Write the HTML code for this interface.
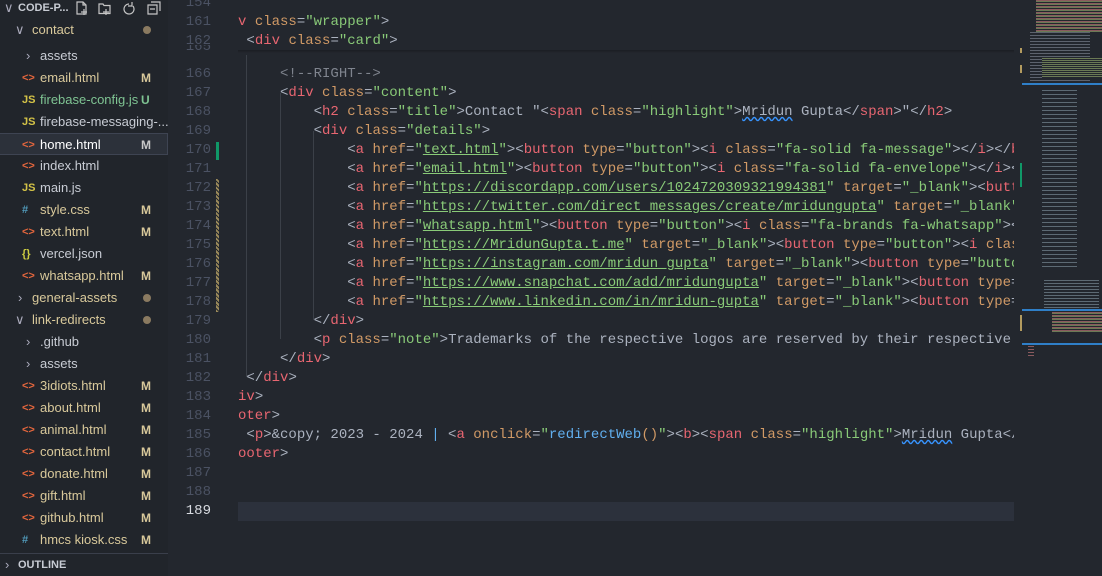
<!DOCTYPE html>
<html><head><meta charset="utf-8"><style>
*{margin:0;padding:0;box-sizing:border-box}
body{width:1102px;height:576px;overflow:hidden;background:#23272e;font-family:"Liberation Sans",sans-serif;position:relative}
#side{position:absolute;left:0;top:0;width:168px;height:576px;background:#21252b;color:#c8ccd4;font-size:13px}
.row{position:absolute;left:0;width:168px;height:22px;line-height:22px;white-space:nowrap}
.row .n{position:absolute}
.row .b{position:absolute;left:141px;font-weight:bold;font-size:12px}
.mod{color:#d9c99b}.unt{color:#7fc493}
.dot{position:absolute;left:143px;top:7px;width:8px;height:8px;border-radius:50%;background:#8a7a60}
.ic{position:absolute;left:22px;font-size:11px;font-weight:bold}
.chev{position:absolute;font-size:13px;color:#aab}
.html{color:#e4663d}.js{color:#d4c347}.css{color:#519aba}.json{color:#cbcb41}
#gut{position:absolute;left:168px;top:0;width:60px;height:576px;color:#4b5263;font-family:"Liberation Mono",monospace;font-size:14px}
.ln{position:absolute;right:17px;height:19px;line-height:19px}
#code{position:absolute;left:238px;top:0;width:776px;height:576px;overflow:hidden;font-family:"Liberation Mono",monospace;font-size:14px;color:#abb2bf}
.l{position:absolute;left:0;height:19px;line-height:19px;white-space:pre}
.t{color:#e86671}.a{color:#d19a66}.s{color:#89ca78}.c{color:#7f848e}.f{color:#61afef}.u{text-decoration:underline;text-decoration-color:#89ca78}
.g{position:absolute;width:1px;background:#3b4048}
#mini{position:absolute;left:1022px;top:0;width:80px;height:576px}
.mb{position:absolute;height:2px}
</style></head><body>
<div id="side">
<div class="row" style="top:-3px"><span class="chev" style="left:4px">∨</span><span class="n" style="left:18px;font-weight:bold;font-size:11px">CODE-P...</span>
<svg style="position:absolute;left:76px;top:4px" width="88" height="14" fill="none" stroke="#c5c5c5" stroke-width="1.2"><path d="M1 1h6l3 3v9H1z M7 1v3h3 M8 8v6 M5 11h6"/><path d="M23 3h4l1 1.5h6v8H23z M30 8v6 M27 11h6"/><path d="M53 3a5 5 0 1 0 4 2 M56 1v4h-4"/><path d="M72 4h9v9h-9z M75 1h9v9 M74 8h5"/></svg></div>
<div class="row mod" style="top:19px"><span class="chev" style="left:15px">∨</span><span class="n" style="left:32px">contact</span><span class="dot"></span></div>
<div class="row" style="top:45px"><span class="chev" style="left:26px">›</span><span class="n" style="left:40px">assets</span></div>
<div class="row mod" style="top:67px"><span class="ic html">&lt;&gt;</span><span class="n" style="left:40px">email.html</span><span class="b">M</span></div>
<div class="row unt" style="top:89px"><span class="ic js">JS</span><span class="n" style="left:40px">firebase-config.js</span><span class="b">U</span></div>
<div class="row" style="top:111px"><span class="ic js">JS</span><span class="n" style="left:40px">firebase-messaging-...</span></div>
<div class="row" style="top:133px;background:#2c313a;border:1px solid #3e4452;border-left:none"><span class="ic html">&lt;&gt;</span><span class="n" style="left:40px;color:#fff">home.html</span><span class="b" style="color:#c8c8c8">M</span></div>
<div class="row" style="top:155px"><span class="ic html">&lt;&gt;</span><span class="n" style="left:40px">index.html</span></div>
<div class="row" style="top:177px"><span class="ic js">JS</span><span class="n" style="left:40px">main.js</span></div>
<div class="row mod" style="top:199px"><span class="ic css">#</span><span class="n" style="left:40px">style.css</span><span class="b">M</span></div>
<div class="row mod" style="top:221px"><span class="ic html">&lt;&gt;</span><span class="n" style="left:40px">text.html</span><span class="b">M</span></div>
<div class="row" style="top:243px"><span class="ic json">{}</span><span class="n" style="left:40px">vercel.json</span></div>
<div class="row mod" style="top:265px"><span class="ic html">&lt;&gt;</span><span class="n" style="left:40px">whatsapp.html</span><span class="b">M</span></div>
<div class="row mod" style="top:287px"><span class="chev" style="left:18px">›</span><span class="n" style="left:32px">general-assets</span><span class="dot"></span></div>
<div class="row mod" style="top:309px"><span class="chev" style="left:15px">∨</span><span class="n" style="left:32px">link-redirects</span><span class="dot"></span></div>
<div class="row" style="top:331px"><span class="chev" style="left:26px">›</span><span class="n" style="left:40px">.github</span></div>
<div class="row" style="top:353px"><span class="chev" style="left:26px">›</span><span class="n" style="left:40px">assets</span></div>
<div class="row mod" style="top:375px"><span class="ic html">&lt;&gt;</span><span class="n" style="left:40px">3idiots.html</span><span class="b">M</span></div>
<div class="row mod" style="top:397px"><span class="ic html">&lt;&gt;</span><span class="n" style="left:40px">about.html</span><span class="b">M</span></div>
<div class="row mod" style="top:419px"><span class="ic html">&lt;&gt;</span><span class="n" style="left:40px">animal.html</span><span class="b">M</span></div>
<div class="row mod" style="top:441px"><span class="ic html">&lt;&gt;</span><span class="n" style="left:40px">contact.html</span><span class="b">M</span></div>
<div class="row mod" style="top:463px"><span class="ic html">&lt;&gt;</span><span class="n" style="left:40px">donate.html</span><span class="b">M</span></div>
<div class="row mod" style="top:485px"><span class="ic html">&lt;&gt;</span><span class="n" style="left:40px">gift.html</span><span class="b">M</span></div>
<div class="row mod" style="top:507px"><span class="ic html">&lt;&gt;</span><span class="n" style="left:40px">github.html</span><span class="b">M</span></div>
<div class="row mod" style="top:529px"><span class="ic css">#</span><span class="n" style="left:40px">hmcs kiosk.css</span><span class="b">M</span></div>
<div style="position:absolute;left:0;top:553px;width:168px;height:1px;background:#3a3f4b"></div>
<div class="row" style="top:554px"><span class="chev" style="left:5px">›</span><span class="n" style="left:18px;font-weight:bold;font-size:11px">OUTLINE</span></div>
</div>

<div id="gut">
<div class="ln" style="top:-6px">154</div>
<div class="ln" style="top:13px">161</div>
<div class="ln" style="top:32px">162</div>
<div class="ln" style="top:45px;height:10px;overflow:hidden;line-height:4px">165</div>
<div class="ln" style="top:65px">166</div><div class="ln" style="top:84px">167</div><div class="ln" style="top:103px">168</div><div class="ln" style="top:122px">169</div><div class="ln" style="top:141px">170</div><div class="ln" style="top:160px">171</div><div class="ln" style="top:179px">172</div><div class="ln" style="top:198px">173</div><div class="ln" style="top:217px">174</div><div class="ln" style="top:236px">175</div><div class="ln" style="top:255px">176</div><div class="ln" style="top:274px">177</div><div class="ln" style="top:293px">178</div><div class="ln" style="top:312px">179</div><div class="ln" style="top:331px">180</div><div class="ln" style="top:350px">181</div><div class="ln" style="top:369px">182</div><div class="ln" style="top:388px">183</div><div class="ln" style="top:407px">184</div><div class="ln" style="top:426px">185</div><div class="ln" style="top:445px">186</div><div class="ln" style="top:464px">187</div><div class="ln" style="top:483px">188</div><div class="ln" style="top:502px;color:#d7dae0">189</div>
<div style="position:absolute;left:48px;top:142px;width:3px;height:18px;background:#109868"></div>
<div style="position:absolute;left:48px;top:179px;width:3px;height:133px;background:repeating-linear-gradient(45deg,#9b8a5a 0 2px,#23272e 2px 3px)"></div>
</div>

<div id="code">
<div style="position:absolute;left:0;top:502px;width:776px;height:19px;background:#2c313c"></div>
<div class="g" style="left:8px;top:55px;height:322px"></div>
<div class="g" style="left:42px;top:93px;height:246px"></div>
<div class="g" style="left:75px;top:131px;height:189px"></div>
<div class="l" style="top:-6px"></div>
<div class="l" style="top:13px"><span class="t">v</span> <span class="a">class</span>=<span class="s">"wrapper"</span>&gt;</div>
<div class="l" style="top:32px"> &lt;<span class="t">div</span> <span class="a">class</span>=<span class="s">"card"</span>&gt;</div>
<div style="position:absolute;left:0;top:50px;width:776px;height:3px;background:linear-gradient(#1b1e23,transparent)"></div>
<div class="l" style="top:65px">     <span class="c">&lt;!--RIGHT--&gt;</span></div>
<div class="l" style="top:84px">     &lt;<span class="t">div</span> <span class="a">class</span>=<span class="s">"content"</span>&gt;</div>
<div class="l" style="top:103px">         &lt;<span class="t">h2</span> <span class="a">class</span>=<span class="s">"title"</span>&gt;Contact "&lt;<span class="t">span</span> <span class="a">class</span>=<span class="s">"highlight"</span>&gt;<span style="text-decoration:underline wavy #3794ff">Mridun</span> Gupta&lt;/<span class="t">span</span>&gt;"&lt;/<span class="t">h2</span>&gt;</div>
<div class="l" style="top:122px">         &lt;<span class="t">div</span> <span class="a">class</span>=<span class="s">"details"</span>&gt;</div>
<div class="l" style="top:141px">             &lt;<span class="t">a</span> <span class="a">href</span>=<span class="s">"<span class="u">text.html</span>"</span>&gt;&lt;<span class="t">button</span> <span class="a">type</span>=<span class="s">"button"</span>&gt;&lt;<span class="t">i</span> <span class="a">class</span>=<span class="s">"fa-solid fa-message"</span>&gt;&lt;/<span class="t">i</span>&gt;&lt;/<span class="t">button</span>&gt;</div>
<div class="l" style="top:160px">             &lt;<span class="t">a</span> <span class="a">href</span>=<span class="s">"<span class="u">email.html</span>"</span>&gt;&lt;<span class="t">button</span> <span class="a">type</span>=<span class="s">"button"</span>&gt;&lt;<span class="t">i</span> <span class="a">class</span>=<span class="s">"fa-solid fa-envelope"</span>&gt;&lt;/<span class="t">i</span>&gt;&lt;/<span class="t">button</span>&gt;</div>
<div class="l" style="top:179px">             &lt;<span class="t">a</span> <span class="a">href</span>=<span class="s">"<span class="u">https://discordapp.com/users/1024720309321994381</span>"</span> <span class="a">target</span>=<span class="s">"_blank"</span>&gt;&lt;<span class="t">button</span></div>
<div class="l" style="top:198px">             &lt;<span class="t">a</span> <span class="a">href</span>=<span class="s">"<span class="u">https://twitter.com/direct_messages/create/mridungupta</span>"</span> <span class="a">target</span>=<span class="s">"_blank"</span>&gt;</div>
<div class="l" style="top:217px">             &lt;<span class="t">a</span> <span class="a">href</span>=<span class="s">"<span class="u">whatsapp.html</span>"</span>&gt;&lt;<span class="t">button</span> <span class="a">type</span>=<span class="s">"button"</span>&gt;&lt;<span class="t">i</span> <span class="a">class</span>=<span class="s">"fa-brands fa-whatsapp"</span>&gt;&lt;/<span class="t">i</span>&gt;</div>
<div class="l" style="top:236px">             &lt;<span class="t">a</span> <span class="a">href</span>=<span class="s">"<span class="u">https://MridunGupta.t.me</span>"</span> <span class="a">target</span>=<span class="s">"_blank"</span>&gt;&lt;<span class="t">button</span> <span class="a">type</span>=<span class="s">"button"</span>&gt;&lt;<span class="t">i</span> <span class="a">class</span></div>
<div class="l" style="top:255px">             &lt;<span class="t">a</span> <span class="a">href</span>=<span class="s">"<span class="u">https://instagram.com/mridun_gupta</span>"</span> <span class="a">target</span>=<span class="s">"_blank"</span>&gt;&lt;<span class="t">button</span> <span class="a">type</span>=<span class="s">"button"</span>&gt;</div>
<div class="l" style="top:274px">             &lt;<span class="t">a</span> <span class="a">href</span>=<span class="s">"<span class="u">https://www.snapchat.com/add/mridungupta</span>"</span> <span class="a">target</span>=<span class="s">"_blank"</span>&gt;&lt;<span class="t">button</span> <span class="a">type</span>=</div>
<div class="l" style="top:293px">             &lt;<span class="t">a</span> <span class="a">href</span>=<span class="s">"<span class="u">https://www.linkedin.com/in/mridun-gupta</span>"</span> <span class="a">target</span>=<span class="s">"_blank"</span>&gt;&lt;<span class="t">button</span> <span class="a">type</span>=</div>
<div class="l" style="top:312px">         &lt;/<span class="t">div</span>&gt;</div>
<div class="l" style="top:331px">         &lt;<span class="t">p</span> <span class="a">class</span>=<span class="s">"note"</span>&gt;Trademarks of the respective logos are reserved by their respective owners</div>
<div class="l" style="top:350px">     &lt;/<span class="t">div</span>&gt;</div>
<div class="l" style="top:369px"> &lt;/<span class="t">div</span>&gt;</div>
<div class="l" style="top:388px"><span class="t">iv</span>&gt;</div>
<div class="l" style="top:407px"><span class="t">oter</span>&gt;</div>
<div class="l" style="top:426px"> &lt;<span class="t">p</span>&gt;&amp;copy; 2023 - 2024 <span class="f">|</span> &lt;<span class="t">a</span> <span class="a">onclick</span>=<span class="s">"</span><span class="f">redirectWeb</span><span class="a">()</span><span class="s">"</span>&gt;&lt;<span class="t">b</span>&gt;&lt;<span class="t">span</span> <span class="a">class</span>=<span class="s">"highlight"</span>&gt;<span style="text-decoration:underline wavy #3794ff">Mridun</span> Gupta&lt;/</div>
<div class="l" style="top:445px"><span class="t">ooter</span>&gt;</div>
</div>

<div style="position:absolute;left:1014px;top:0;width:8px;height:576px;background:#23272e"></div>
<div id="mini">
<div style="position:absolute;left:14px;top:0;width:66px;height:32px;background:repeating-linear-gradient(#8a5a5e 0 1px,#6b7a55 1px 2px,#23272e 2px 3px)"></div>
<div style="position:absolute;left:8px;top:32px;width:60px;height:50px;background:repeating-linear-gradient(#5d636e 0 1px,#23272e 1px 3px)"></div>
<div style="position:absolute;left:20px;top:58px;width:60px;height:20px;background:repeating-linear-gradient(#6b7a55 0 1px,#23272e 1px 2px)"></div>
<div class="mb" style="left:0;top:83px;width:80px;background:#2f7fc8"></div>
<div style="position:absolute;left:20px;top:90px;width:35px;height:180px;background:repeating-linear-gradient(#5d6a74 0 1px,#23272e 1px 4px)"></div>
<div style="position:absolute;left:22px;top:280px;width:55px;height:30px;background:repeating-linear-gradient(#5d6a74 0 1px,#23272e 1px 3px)"></div>
<div class="mb" style="left:0;top:309px;width:80px;background:#2f7fc8"></div>
<div style="position:absolute;left:30px;top:312px;width:50px;height:20px;background:repeating-linear-gradient(#8a5a5e 0 1px,#6b7a55 1px 2px,#23272e 2px 3px)"></div>
<div class="mb" style="left:0;top:343px;width:80px;background:#2f7fc8"></div>
<div style="position:absolute;left:6px;top:346px;width:6px;height:10px;background:repeating-linear-gradient(#8a5a5e 0 1px,#23272e 1px 3px)"></div>
</div>
<div style="position:absolute;left:1020px;top:0;width:2px;height:576px">
<div style="position:absolute;top:48px;height:5px;width:2px;background:#b39b5f"></div>
<div style="position:absolute;top:65px;height:8px;width:2px;background:#b39b5f"></div>
<div style="position:absolute;top:163px;height:24px;width:2px;background:#109868"></div>
<div style="position:absolute;top:315px;height:16px;width:2px;background:#b39b5f"></div>
</div>
</body></html>
